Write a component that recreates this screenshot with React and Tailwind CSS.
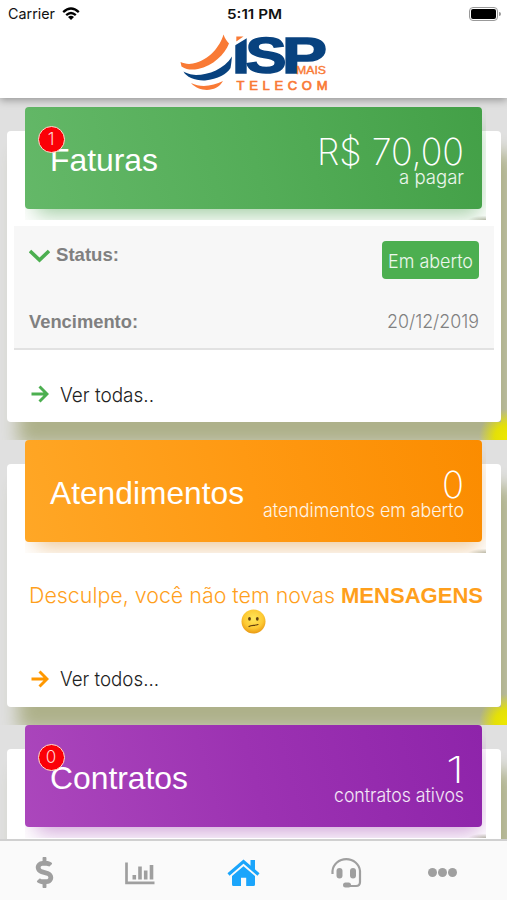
import React from "react";
import { FaDollarSign } from "react-icons/fa";

const SANS = "font-['Liberation_Sans',Arial,sans-serif]";
const LIGHT = "font-[Inter,'Liberation_Sans',sans-serif] font-light";

/* Single line of SVG text fitted to a fixed advance width. */
function Fit({ children, w, h, size, base, className = "", weight = 400, font = "Liberation Sans, Arial, sans-serif" }) {
  return (
    <svg width={w} height={h} className={`block shrink-0 overflow-visible ${className}`}>
      <text x="0" y={base} fontSize={size} fontWeight={weight} fontFamily={font} textLength={w} lengthAdjust="spacingAndGlyphs" fill="currentColor">
        {children}
      </text>
    </svg>
  );
}

const THIN = "Inter, Liberation Sans, sans-serif";

function Logo() {
  return (
    <svg width="150" height="64" viewBox="180 32 150 64" className="block overflow-visible">
      <path d="M223.500 34.500 C220 46 210 60 193 63.500 C188 64.500 184 63.500 180.500 62 L181.500 66.500 C187 70 192 70 198 69 C213 66 225 54 229 43.500 C227 41 225 39 223.500 34.500Z" fill="#f97a35" />
      <path d="M232 56.500 C224 69 209 75 196 75 C190 74.500 187 73.500 183.500 71.500 C186 77 196 81 205 80.500 C218 79 227 74 230.500 68 C231.500 63 231.500 60 232 56.500Z" fill="#08427f" />
      <path d="M191 83 C201 88 213 86 223 81 C217 92 200 93 191 83Z" fill="#f97a35" />
      <g fontSize="50" fontWeight="700" fontFamily="Liberation Sans, sans-serif" fill="#08427f" stroke="#08427f" strokeWidth="1.600">
        <text x="232" y="73" textLength="18" lengthAdjust="spacingAndGlyphs">I</text>
        <text x="245.500" y="73" textLength="41" lengthAdjust="spacingAndGlyphs">S</text>
        <text x="282" y="73" textLength="45" lengthAdjust="spacingAndGlyphs">P</text>
      </g>
      <path d="M234 35 H248 V37.500 L234 46Z" fill="#fff" />
      <path d="M236.300 36.500 H243.500 L236.300 41.500Z" fill="#f97a35" />
      <text x="296" y="73.500" fontSize="11" fontFamily="Liberation Sans, sans-serif" textLength="30" lengthAdjust="spacingAndGlyphs" fill="#f97a35" stroke="#f97a35" strokeWidth="0.400">MAIS</text>
      <text x="236.500" y="89.500" fontSize="13" fontFamily="Liberation Sans, sans-serif" textLength="91" fill="#f97a35" stroke="#f97a35" strokeWidth="0.700">TELECOM</text>
    </svg>
  );
}

function Wifi() {
  return (
    <svg width="18" height="14" viewBox="0 0 18 14" fill="none" stroke="#000" strokeWidth="2.300" className="block">
      <path d="M1.200 5.200 Q9 -2.200 16.800 5.200" />
      <path d="M4.200 8.200 Q9 3.800 13.800 8.200" />
      <path d="M9 13 L6 10 Q9 7.700 12 10Z" fill="#000" stroke="none" />
    </svg>
  );
}

function Arrow({ className }) {
  return (
    <svg width="18" height="18" viewBox="0 0 18 18" fill="none" stroke="currentColor" strokeWidth="2.900" className={`block ${className}`}>
      <path d="M0.500 9 H16 M8.500 1.500 L16 9 L8.500 16.500" />
    </svg>
  );
}

function Badge({ children }) {
  return (
    <span className={`absolute left-[12.500px] top-[18.500px] flex h-[27px] w-[27px] items-center justify-center rounded-full border border-[#ffe0d0] bg-[#fb0007] text-[17px] leading-none text-[#ffd2d2] ${LIGHT}`}>
      {children}
    </span>
  );
}

function Section({ height, cardHeight, header, glow, badge, title, titleWidth, value, valueWidth, note, noteWidth, children }) {
  return (
    <section className={`flow-root overflow-hidden ${height}`}>
      <div className={`mt-6 ml-[7px] flow-root w-[494px] rounded bg-white px-[7px] shadow-[12px_23px_18px_1px_#aeb18a] ${cardHeight}`}>
        <div className="relative -mt-6 ml-[11px] h-[113px] w-[461px] overflow-hidden bg-[radial-gradient(ellipse_at_100%_100%,rgba(120,120,90,0.500)_0px,transparent_18px)]">
          <div className={`relative flex h-[102px] w-[457px] justify-between rounded-[4px] pl-[25px] pr-[18px] ${header} ${glow}`}>
            <Fit w={titleWidth} h="40" size="31.500" base="31" className="mt-[33px] text-white">{title}</Fit>
            {badge !== undefined && <Badge>{badge}</Badge>}
            <div className="flex flex-col items-end text-white/90">
              <Fit w={valueWidth} h="37" size="37" base="31" weight="250" font={THIN} className="mt-[27px] text-white">{value}</Fit>
              <Fit w={noteWidth} h="22" size="18.500" base="13" weight="300" font={THIN}>{note}</Fit>
            </div>
          </div>
        </div>
        {children}
      </div>
      {/* Bright spot where the card's shadow meets the screen edge. */}
      <div className="-mt-4 ml-auto h-[34px] w-[34px] bg-[radial-gradient(circle_at_100%_31px,#eee800_0px,#e4e008_12px,transparent_28px)] [clip-path:polygon(28px_0,100%_0,100%_100%,0_100%,0_16px,28px_16px)]" />
    </section>
  );
}

function Confused() {
  return (
    <svg width="25" height="25" viewBox="0 0 25 25" className="block">
      <defs>
        <radialGradient id="face" cx="50%" cy="38%" r="62%">
          <stop offset="0" stopColor="#ffe75a" />
          <stop offset="0.650" stopColor="#fdc933" />
          <stop offset="1" stopColor="#e99914" />
        </radialGradient>
      </defs>
      <circle cx="12.500" cy="12.500" r="12" fill="url(#face)" />
      <ellipse cx="8.500" cy="9.800" rx="1.400" ry="1.900" fill="#64400f" />
      <ellipse cx="16.300" cy="9.800" rx="1.400" ry="1.900" fill="#64400f" />
      <path d="M8 17.500 C10.500 15.500 13.500 17 17 15.500" fill="none" stroke="#64400f" strokeWidth="1.200" strokeLinecap="round" />
    </svg>
  );
}

function ChartIcon() {
  return (
    <svg width="30" height="23" viewBox="0 0 30 23" fill="none" stroke="currentColor" className="block">
      <path d="M1.500 0.500 V20.800 H29.500" strokeWidth="2.700" />
      <path d="M9.300 17.500 V13 M15 17.500 V4.500 M20.700 17.500 V8.500 M26.500 17.500 V3" strokeWidth="3.600" />
    </svg>
  );
}

function HomeIcon() {
  return (
    <svg width="33" height="27" viewBox="0 0 33 27" className="block">
      <path d="M1.500 15.500 L16.500 2.500 L31.500 15.500" fill="none" stroke="currentColor" strokeWidth="3.200" />
      <path d="M23.500 1 H28 V12 L23.500 8Z" fill="currentColor" />
      <path d="M5 17 L16.500 7.300 L28 17 V25.500 Q28 27 26.500 27 H19.200 V18.800 H14 V27 H6.500 Q5 27 5 25.500Z" fill="currentColor" />
    </svg>
  );
}

function HeadsetIcon() {
  return (
    <svg width="31" height="31" viewBox="0 0 31 31" className="block">
      <path d="M1.500 17 V14 A13.800 13 0 0 1 29 14 V25 Q29 29 25 29 H15" fill="none" stroke="currentColor" strokeWidth="2.200" />
      <rect x="5.500" y="11" width="6" height="10.500" rx="3" fill="currentColor" />
      <rect x="19" y="11" width="6" height="10.500" rx="3" fill="currentColor" />
      <rect x="12" y="25.500" width="8" height="5" rx="2.500" fill="currentColor" />
    </svg>
  );
}

export default function App() {
  return (
    <div className={`flex h-[900px] w-[507px] flex-col overflow-hidden bg-[#e0e0e0] ${SANS}`}>
      <header className="relative z-10 h-[98px] shrink-0 bg-white shadow-[0_2px_8px_rgba(0,0,0,0.350)]">
        <div className="flex h-7 items-center px-2 pr-[6px]">
          <div className="flex flex-1 items-center gap-[7px]">
            <Fit w="47" h="16" size="14.500" base="13" font="Inter, sans-serif" className="text-[#111]">Carrier</Fit>
            <Wifi />
          </div>
          <Fit w="55" h="16" size="13.500" base="13" weight="600" font="Inter, sans-serif" className="text-[#111]">5:11 PM</Fit>
          <div className="flex flex-1 items-center justify-end">
            <div className="h-[14px] w-[29px] rounded-[4px] border border-[#999] p-[1px]">
              <div className="h-full w-full rounded-[2px] bg-black" />
            </div>
            <div className="ml-[1px] h-1 w-[2px] rounded-r bg-[#999]" />
          </div>
        </div>
        <div className="ml-[180px] mt-1"><Logo /></div>
      </header>

      <main className="min-h-0 flex-1 overflow-hidden pt-[9px]">
        <Section height="h-[333px]" cardHeight="h-[291px]"
          header="bg-[linear-gradient(75deg,#64b868,#54ad58_50%,#43a047)]" glow="shadow-[4px_12px_20px_-7px_rgba(76,160,80,0.550)]"
          badge="1" title="Faturas" titleWidth="108" value="R$ 70,00" valueWidth="147" note="a pagar" noteWidth="65">
          <div className="mt-[6px] h-[124px] border-b-2 border-[#e2e2e2] bg-[#f7f7f7] px-[15px] pt-[15px] text-[#808080]">
            <div className="flex h-[38px] justify-between">
              <div className="flex gap-[6px]">
                <svg width="21" height="14" viewBox="0 0 21 14" fill="none" stroke="#4caf50" strokeWidth="3.600" className="mt-[8px] block">
                  <path d="M1 2 L10.500 11 L20 2" />
                </svg>
                <Fit w="63" h="22" size="19" base="20" weight="700">Status:</Fit>
              </div>
              <div className="flex h-[38px] w-[97px] justify-center rounded-[4px] bg-[#4caf50] text-white/90">
                <Fit w="85" h="22" size="18.500" base="26.500" weight="300" font={THIN}>Em aberto</Fit>
              </div>
            </div>
            <div className="mt-[28px] flex justify-between">
              <Fit w="109" h="24" size="19" base="21" weight="700">Vencimento:</Fit>
              <Fit w="92" h="24" size="18.500" base="21" weight="300" font={THIN}>20/12/2019</Fit>
            </div>
          </div>
          <div className="mt-[35px] flex gap-[11px] pl-[17px] text-[#222]">
            <Arrow className="text-[#4caf50]" />
            <Fit w="94" h="24" size="20" base="17" weight="300" font={THIN}>Ver todas..</Fit>
          </div>
        </Section>

        <Section height="h-[285px]" cardHeight="h-[243px]"
          header="bg-[linear-gradient(75deg,#ffa726,#ff9912_50%,#fb8c00)]" glow="shadow-[4px_12px_20px_-7px_rgba(220,150,60,0.550)]"
          title="Atendimentos" titleWidth="194" value="0" valueWidth="22" note="atendimentos em aberto" noteWidth="201">
          <div className="mt-[26px] flex items-start gap-[6px] pl-[15px] text-[#ff9f1c]">
            <Fit w="306" h="28" size="22" base="24" weight="300" font={THIN}>Desculpe, você não tem novas</Fit>
            <Fit w="142" h="28" size="22" base="24" weight="700">MENSAGENS</Fit>
          </div>
          <div className="mt-[2px] mr-[1px] flex justify-center"><Confused /></div>
          <div className="mt-[36px] flex gap-[11px] pl-[17px] text-[#222]">
            <Arrow className="text-[#ff9800]" />
            <Fit w="99" h="24" size="20" base="16" weight="300" font={THIN}>Ver todos...</Fit>
          </div>
        </Section>

        <Section height="h-[285px]" cardHeight="h-[243px]"
          header="bg-[linear-gradient(75deg,#ab47bc,#9c32b2_50%,#8e24aa)]" glow="shadow-[4px_12px_20px_-7px_rgba(165,80,180,0.550)]"
          badge="0" title="Contratos" titleWidth="138" value="1" valueWidth="18" note="contratos ativos" noteWidth="130" />
      </main>

      <nav className="relative z-10 flex h-[61px] shrink-0 items-start border-t-2 border-[#d0d0d0] bg-[#fafafa] pl-[35px] text-[#9f9f9f]">
        <FaDollarSign className="mt-[16px] h-[31px] w-[19px]" />
        <div className="mt-[21px] ml-[71px]"><ChartIcon /></div>
        <div className="mt-[18px] ml-[72px] text-[#1ba5fb]"><HomeIcon /></div>
        <div className="mt-[16px] ml-[71px]"><HeadsetIcon /></div>
        <div className="mt-[27px] ml-[66px] flex gap-[1px]">
          <span className="h-[9px] w-[9px] rounded-full bg-[#9f9f9f]" />
          <span className="h-[9px] w-[9px] rounded-full bg-[#9f9f9f]" />
          <span className="h-[9px] w-[9px] rounded-full bg-[#9f9f9f]" />
        </div>
      </nav>
    </div>
  );
}
